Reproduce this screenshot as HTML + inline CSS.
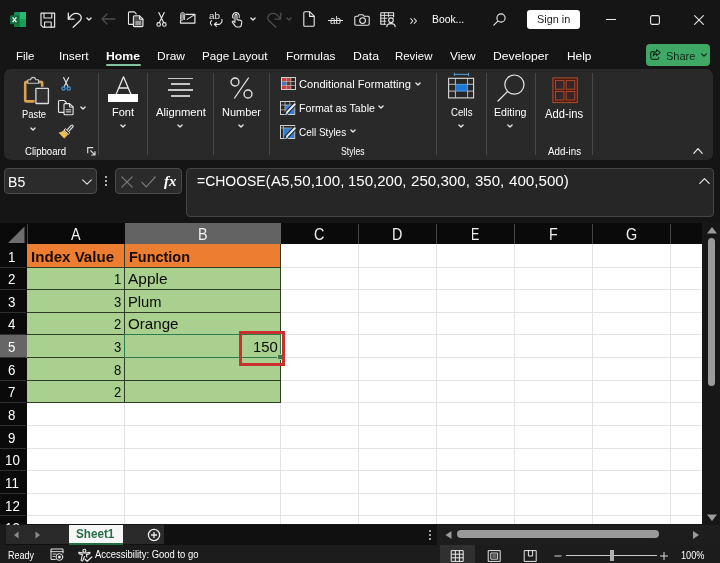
<!DOCTYPE html><html><head><meta charset="utf-8"><title>Excel</title><style>
html,body{margin:0;padding:0;}body{width:720px;height:563px;overflow:hidden;position:relative;background:#151515;font-family:'Liberation Sans', sans-serif;}
.t{position:absolute;white-space:nowrap;line-height:1;transform-origin:0 0;}
#w{position:absolute;left:0;top:0;width:720px;height:563px;will-change:transform;}
</style></head><body><div id="w">
<div style="position:absolute;left:527px;top:10px;width:53px;height:19px;background:#ffffff;z-index:2;border-radius:3px;"></div>
<div style="position:absolute;left:106px;top:63.8px;width:35px;height:2.2px;background:#82c4a0;z-index:3;border-radius:1px;"></div>
<div style="position:absolute;left:646px;top:44px;width:64px;height:22px;background:#3fa865;z-index:2;border-radius:4px;"></div>
<div style="position:absolute;left:4px;top:69px;width:709px;height:91px;background:#292929;z-index:1;border-radius:7px;"></div>
<div style="position:absolute;left:98.2px;top:73px;width:1px;height:82px;background:#484848;z-index:2;"></div>
<div style="position:absolute;left:147.1px;top:73px;width:1px;height:82px;background:#484848;z-index:2;"></div>
<div style="position:absolute;left:213.1px;top:73px;width:1px;height:82px;background:#484848;z-index:2;"></div>
<div style="position:absolute;left:269px;top:73px;width:1px;height:82px;background:#484848;z-index:2;"></div>
<div style="position:absolute;left:435.7px;top:73px;width:1px;height:82px;background:#484848;z-index:2;"></div>
<div style="position:absolute;left:485.7px;top:73px;width:1px;height:82px;background:#484848;z-index:2;"></div>
<div style="position:absolute;left:535px;top:73px;width:1px;height:82px;background:#484848;z-index:2;"></div>
<div style="position:absolute;left:592px;top:73px;width:1px;height:82px;background:#484848;z-index:2;"></div>
<div style="position:absolute;left:4px;top:168px;width:93px;height:26px;background:#2b2b2b;z-index:1;border-radius:4px;box-sizing:border-box;border:1px solid #4a4a4a;"></div>
<div style="position:absolute;left:115px;top:168px;width:67px;height:26px;background:#2b2b2b;z-index:1;border-radius:4px;box-sizing:border-box;border:1px solid #4a4a4a;"></div>
<div style="position:absolute;left:186px;top:168px;width:528px;height:49px;background:#262626;z-index:1;border-radius:4px;box-sizing:border-box;border:1px solid #454545;"></div>
<div style="position:absolute;left:27px;top:244.4px;width:675.2px;height:280.1px;background:#ffffff;z-index:1;"></div>
<div style="position:absolute;left:124.0px;top:244.4px;width:1px;height:280.1px;background:#e4e4e4;z-index:2;"></div>
<div style="position:absolute;left:280.3px;top:244.4px;width:1px;height:280.1px;background:#e4e4e4;z-index:2;"></div>
<div style="position:absolute;left:358.1px;top:244.4px;width:1px;height:280.1px;background:#e4e4e4;z-index:2;"></div>
<div style="position:absolute;left:436.1px;top:244.4px;width:1px;height:280.1px;background:#e4e4e4;z-index:2;"></div>
<div style="position:absolute;left:514.1px;top:244.4px;width:1px;height:280.1px;background:#e4e4e4;z-index:2;"></div>
<div style="position:absolute;left:592.1px;top:244.4px;width:1px;height:280.1px;background:#e4e4e4;z-index:2;"></div>
<div style="position:absolute;left:670.3px;top:244.4px;width:1px;height:280.1px;background:#e4e4e4;z-index:2;"></div>
<div style="position:absolute;left:27px;top:266.53000000000003px;width:675.2px;height:1px;background:#e4e4e4;z-index:2;"></div>
<div style="position:absolute;left:27px;top:289.16px;width:675.2px;height:1px;background:#e4e4e4;z-index:2;"></div>
<div style="position:absolute;left:27px;top:311.79px;width:675.2px;height:1px;background:#e4e4e4;z-index:2;"></div>
<div style="position:absolute;left:27px;top:334.42px;width:675.2px;height:1px;background:#e4e4e4;z-index:2;"></div>
<div style="position:absolute;left:27px;top:357.05px;width:675.2px;height:1px;background:#e4e4e4;z-index:2;"></div>
<div style="position:absolute;left:27px;top:379.68px;width:675.2px;height:1px;background:#e4e4e4;z-index:2;"></div>
<div style="position:absolute;left:27px;top:402.31px;width:675.2px;height:1px;background:#e4e4e4;z-index:2;"></div>
<div style="position:absolute;left:27px;top:424.94px;width:675.2px;height:1px;background:#e4e4e4;z-index:2;"></div>
<div style="position:absolute;left:27px;top:447.57px;width:675.2px;height:1px;background:#e4e4e4;z-index:2;"></div>
<div style="position:absolute;left:27px;top:470.2px;width:675.2px;height:1px;background:#e4e4e4;z-index:2;"></div>
<div style="position:absolute;left:27px;top:492.83px;width:675.2px;height:1px;background:#e4e4e4;z-index:2;"></div>
<div style="position:absolute;left:27px;top:515.46px;width:675.2px;height:1px;background:#e4e4e4;z-index:2;"></div>
<div style="position:absolute;left:0px;top:222.5px;width:702.2px;height:21.900000000000006px;background:#0a0a0a;z-index:2;"></div>
<div style="position:absolute;left:124.5px;top:222.5px;width:156.3px;height:21.900000000000006px;background:#636363;z-index:3;"></div>
<div style="position:absolute;left:358.1px;top:223.5px;width:1px;height:20.900000000000006px;background:#454545;z-index:3;"></div>
<div style="position:absolute;left:436.1px;top:223.5px;width:1px;height:20.900000000000006px;background:#454545;z-index:3;"></div>
<div style="position:absolute;left:514.1px;top:223.5px;width:1px;height:20.900000000000006px;background:#454545;z-index:3;"></div>
<div style="position:absolute;left:592.1px;top:223.5px;width:1px;height:20.900000000000006px;background:#454545;z-index:3;"></div>
<div style="position:absolute;left:670.3px;top:223.5px;width:1px;height:20.900000000000006px;background:#454545;z-index:3;"></div>
<div style="position:absolute;left:26.5px;top:223.5px;width:1px;height:20.900000000000006px;background:#454545;z-index:3;"></div>
<svg style="position:absolute;left:0px;top:222.5px;z-index:3;overflow:visible;" width="27" height="22" viewBox="0 0 27 22"><polygon points="24.5,3.5 24.5,20 8,20" fill="#6e6e6e"/></svg>
<div style="position:absolute;left:0px;top:244.4px;width:27px;height:280.1px;background:#0a0a0a;z-index:2;"></div>
<div style="position:absolute;left:0px;top:334.92px;width:27px;height:22.63px;background:#666666;z-index:3;"></div>
<div style="position:absolute;left:0px;top:266.53000000000003px;width:26px;height:1px;background:#303030;z-index:3;"></div>
<div style="position:absolute;left:0px;top:289.16px;width:26px;height:1px;background:#303030;z-index:3;"></div>
<div style="position:absolute;left:0px;top:311.79px;width:26px;height:1px;background:#303030;z-index:3;"></div>
<div style="position:absolute;left:0px;top:334.42px;width:26px;height:1px;background:#303030;z-index:3;"></div>
<div style="position:absolute;left:0px;top:357.05px;width:26px;height:1px;background:#303030;z-index:3;"></div>
<div style="position:absolute;left:0px;top:379.68px;width:26px;height:1px;background:#303030;z-index:3;"></div>
<div style="position:absolute;left:0px;top:402.31px;width:26px;height:1px;background:#303030;z-index:3;"></div>
<div style="position:absolute;left:0px;top:424.94px;width:26px;height:1px;background:#303030;z-index:3;"></div>
<div style="position:absolute;left:0px;top:447.57px;width:26px;height:1px;background:#303030;z-index:3;"></div>
<div style="position:absolute;left:0px;top:470.2px;width:26px;height:1px;background:#303030;z-index:3;"></div>
<div style="position:absolute;left:0px;top:492.83px;width:26px;height:1px;background:#303030;z-index:3;"></div>
<div style="position:absolute;left:0px;top:515.46px;width:26px;height:1px;background:#303030;z-index:3;"></div>
<div style="position:absolute;left:27px;top:244.4px;width:253.8px;height:22.63px;background:#ed7d31;z-index:3;"></div>
<div style="position:absolute;left:27px;top:267.03000000000003px;width:253.8px;height:135.78px;background:#a9d08e;z-index:3;"></div>
<div style="position:absolute;left:27px;top:266.53000000000003px;width:254.3px;height:1px;background:#2f3b22;z-index:4;"></div>
<div style="position:absolute;left:27px;top:289.16px;width:254.3px;height:1px;background:#2f3b22;z-index:4;"></div>
<div style="position:absolute;left:27px;top:311.79px;width:254.3px;height:1px;background:#2f3b22;z-index:4;"></div>
<div style="position:absolute;left:27px;top:334.42px;width:254.3px;height:1px;background:#2f3b22;z-index:4;"></div>
<div style="position:absolute;left:27px;top:357.05px;width:254.3px;height:1px;background:#2f3b22;z-index:4;"></div>
<div style="position:absolute;left:27px;top:379.68px;width:254.3px;height:1px;background:#2f3b22;z-index:4;"></div>
<div style="position:absolute;left:27px;top:402.31px;width:254.3px;height:1px;background:#2f3b22;z-index:4;"></div>
<div style="position:absolute;left:124.0px;top:244.4px;width:1px;height:158.41px;background:#2f3b22;z-index:4;"></div>
<div style="position:absolute;left:280.3px;top:244.4px;width:1px;height:158.41px;background:#2f3b22;z-index:4;"></div>
<div style="position:absolute;left:124.0px;top:333.92px;width:157.3px;height:24.13px;background:transparent;z-index:5;box-sizing:border-box;border:1.5px solid #2f7d4f;"></div>
<div style="position:absolute;left:277.8px;top:354.55px;width:4px;height:4px;background:#2f7d4f;z-index:6;outline:1px solid #a9d08e;"></div>
<div style="position:absolute;left:239px;top:331px;width:46px;height:35.3px;background:transparent;z-index:7;box-sizing:border-box;border:3px solid #cc2f2f;"></div>
<div style="position:absolute;left:702.2px;top:222.5px;width:17.799999999999955px;height:302.0px;background:#171717;z-index:2;"></div>
<div style="position:absolute;left:707.9px;top:238px;width:7.2px;height:147.5px;background:#9a9a9a;z-index:3;border-radius:4px;"></div>
<svg style="position:absolute;left:706px;top:226px;z-index:3;overflow:visible;" width="12" height="8" viewBox="0 0 12 8"><polygon points="6,1 11,7.5 1,7.5" fill="#9a9a9a"/></svg>
<svg style="position:absolute;left:706px;top:514px;z-index:3;overflow:visible;" width="12" height="8" viewBox="0 0 12 8"><polygon points="1,0.5 11,0.5 6,7" fill="#9a9a9a"/></svg>
<div style="position:absolute;left:0px;top:524.5px;width:720px;height:20.5px;background:#101010;z-index:12;"></div>
<div style="position:absolute;left:0px;top:524.5px;width:6px;height:20.5px;background:#1a1a1a;z-index:12;"></div>
<div style="position:absolute;left:436.6px;top:524.5px;width:283.4px;height:20.5px;background:#1d1d1d;z-index:12;"></div>
<div style="position:absolute;left:6px;top:524.5px;width:158.4px;height:19.8px;background:#2a2a2a;z-index:13;"></div>
<div style="position:absolute;left:68.6px;top:524.5px;width:54.4px;height:20px;background:#f7f7f7;z-index:14;"></div>
<div style="position:absolute;left:68.6px;top:543px;width:54.4px;height:1.5px;background:#236b43;z-index:15;"></div>
<svg style="position:absolute;left:12px;top:530px;z-index:15;overflow:visible;" width="10" height="10" viewBox="0 0 10 10"><polygon points="6.5,1.5 6.5,8.5 2,5" fill="#8c8c8c"/></svg>
<svg style="position:absolute;left:32px;top:530px;z-index:15;overflow:visible;" width="10" height="10" viewBox="0 0 10 10"><polygon points="3.5,1.5 3.5,8.5 8,5" fill="#8c8c8c"/></svg>
<svg style="position:absolute;left:146.5px;top:527.5px;z-index:15;overflow:visible;" width="14" height="14" viewBox="0 0 14 14"><circle cx="7" cy="7" r="5.6" fill="none" stroke="#ececec" stroke-width="1.3"/><path d="M7 4v6M4 7h6" stroke="#ececec" stroke-width="1.3"/></svg>
<div style="position:absolute;left:429.2px;top:530.1px;width:1.8px;height:1.8px;background:#d0d0d0;z-index:14;border-radius:1px;"></div>
<div style="position:absolute;left:429.2px;top:534.1px;width:1.8px;height:1.8px;background:#d0d0d0;z-index:14;border-radius:1px;"></div>
<div style="position:absolute;left:429.2px;top:538.1px;width:1.8px;height:1.8px;background:#d0d0d0;z-index:14;border-radius:1px;"></div>
<svg style="position:absolute;left:443px;top:530px;z-index:14;overflow:visible;" width="10" height="10" viewBox="0 0 10 10"><polygon points="8.5,1 8.5,9 2.5,5" fill="#9a9a9a"/></svg>
<svg style="position:absolute;left:691px;top:530px;z-index:14;overflow:visible;" width="10" height="10" viewBox="0 0 10 10"><polygon points="2,1 2,9 8,5" fill="#9a9a9a"/></svg>
<div style="position:absolute;left:456.5px;top:530px;width:202px;height:8.4px;background:#9a9a9a;z-index:14;border-radius:4.2px;"></div>
<div style="position:absolute;left:0px;top:545px;width:720px;height:18px;background:#1c1c1c;z-index:12;"></div>
<div style="position:absolute;left:439.6px;top:545px;width:35.6px;height:18px;background:#303030;z-index:13;"></div>
<div style="position:absolute;left:566px;top:555px;width:91px;height:1px;background:#c8c8c8;z-index:13;"></div>
<div style="position:absolute;left:609.5px;top:549.5px;width:4.5px;height:11.5px;background:#b0b0b0;z-index:14;"></div>
<svg style="position:absolute;left:553px;top:551px;z-index:14;overflow:visible;" width="10" height="10" viewBox="0 0 10 10"><path d="M1.5 5h7" stroke="#d8d8d8" stroke-width="1"/></svg>
<svg style="position:absolute;left:659px;top:551px;z-index:14;overflow:visible;" width="10" height="10" viewBox="0 0 10 10"><path d="M1 5h8M5 1v8" stroke="#d8d8d8" stroke-width="1"/></svg>
<svg style="position:absolute;left:10px;top:12px;z-index:4;overflow:visible;" width="16" height="15" viewBox="0 0 16 15"><rect x="4" y="0" width="12" height="15" rx="1.5" fill="#1a8f55"/><rect x="10" y="0" width="6" height="7.5" fill="#2bb673"/><rect x="4" y="7.5" width="6" height="7.5" fill="#107c41"/><rect x="10" y="7.5" width="6" height="7.5" fill="#1c9a5c"/><rect x="0" y="3.3" width="9" height="9" rx="1" fill="#0f6e3b"/><path d="M2.6 5.4L6.4 10.2M6.4 5.4L2.6 10.2" stroke="#fff" stroke-width="1.3"/></svg>
<svg style="position:absolute;left:40px;top:11.5px;z-index:4;overflow:visible;" width="16" height="16" viewBox="0 0 16 16"><path d="M1 1.2H14.6V15.2H3L1 13.2Z" fill="none" stroke="#e8e8e8" stroke-width="1.2" stroke-linecap="round" stroke-linejoin="round"/><path d="M4 1.2V6H11.8V1.2" fill="none" stroke="#e8e8e8" stroke-width="1.1" stroke-linecap="round" stroke-linejoin="round"/><path d="M4.6 15.2V10H11.2V15.2" fill="none" stroke="#e8e8e8" stroke-width="1.1" stroke-linecap="round" stroke-linejoin="round"/></svg>
<svg style="position:absolute;left:66.5px;top:11.5px;z-index:4;overflow:visible;" width="16" height="16" viewBox="0 0 16 16"><path d="M1.3 1.2V7.1H7" fill="none" stroke="#e8e8e8" stroke-width="1.3" stroke-linecap="round" stroke-linejoin="round"/><path d="M1.5 6.9C4 3 7.6 0.7 11 1.7C14.6 2.9 15.2 6.4 13 8.8L6.2 15.2" fill="none" stroke="#e8e8e8" stroke-width="1.3" stroke-linecap="round" stroke-linejoin="round"/></svg>
<svg style="position:absolute;left:83.8px;top:13.8px;z-index:4;overflow:visible;" width="10" height="10" viewBox="0 0 10 10"><path d="M2.9 3.95L5 6.05L7.1 3.95" fill="none" stroke="#e8e8e8" stroke-width="1.3" stroke-linecap="round" stroke-linejoin="round"/></svg>
<svg style="position:absolute;left:101px;top:13px;z-index:4;overflow:visible;" width="15" height="12" viewBox="0 0 15 12"><path d="M14 6H1M6 1L1 6L6 11" fill="none" stroke="#4c4c4c" stroke-width="1.3" stroke-linecap="round" stroke-linejoin="round"/></svg>
<svg style="position:absolute;left:128px;top:11px;z-index:4;overflow:visible;" width="16" height="16" viewBox="0 0 16 16"><path d="M5.2 13.4H1.5Q0.5 13.4 0.5 12.4V1.9Q0.5 0.9 1.5 0.9H5.8Q6.4 0.9 6.9 1.4L8.2 2.8" fill="none" stroke="#e8e8e8" stroke-width="1.1" stroke-linecap="round" stroke-linejoin="round"/><path d="M5.4 5.8Q5.4 4.8 6.4 4.8H11.6L15 8.2V14.6Q15 15.6 14 15.6H6.4Q5.4 15.6 5.4 14.6Z" fill="#4e4e4e" stroke="#e8e8e8" stroke-width="1.1" stroke-linejoin="round"/><path d="M11.5 5V8.3H14.8" fill="none" stroke="#e8e8e8" stroke-width="1" stroke-linecap="round" stroke-linejoin="round"/><path d="M7.8 11H12.6M7.8 13H12.6" fill="none" stroke="#e8e8e8" stroke-width="1" stroke-linecap="round" stroke-linejoin="round"/></svg>
<svg style="position:absolute;left:156px;top:12px;z-index:4;overflow:visible;" width="11.0" height="15.0" viewBox="0 0 11 15"><path d="M2.8 0.6L7.6 10.4M8.2 0.6L3.4 10.4" fill="none" stroke="#e8e8e8" stroke-width="1.1" stroke-linecap="round" stroke-linejoin="round"/><circle cx="2.7" cy="12.4" r="1.8" fill="none" stroke="#e8e8e8" stroke-width="1.1" stroke-linecap="round" stroke-linejoin="round"/><circle cx="8.3" cy="12.4" r="1.8" fill="none" stroke="#e8e8e8" stroke-width="1.1" stroke-linecap="round" stroke-linejoin="round"/></svg>
<svg style="position:absolute;left:180px;top:12px;z-index:4;overflow:visible;" width="16" height="12" viewBox="0 0 16 12"><path d="M5.9 2.4H14.9V11.1H0.5V8.6" fill="none" stroke="#e8e8e8" stroke-width="1.2" stroke-linecap="round" stroke-linejoin="round"/><path d="M14.7 2.6L7.2 7.4" fill="none" stroke="#e8e8e8" stroke-width="1.1" stroke-linecap="round" stroke-linejoin="round"/><path d="M0.6 6.8V2.6Q0.6 0.5 2.6 0.5Q4.6 0.5 4.6 2.6V7.6" fill="none" stroke="#e8e8e8" stroke-width="0.9" stroke-linecap="round" stroke-linejoin="round"/><path d="M1.9 6.4V3Q1.9 1.9 2.6 1.9Q3.3 1.9 3.3 3V6.8Q3.3 8.3 2 8.3Q0.6 8.3 0.6 6.8" fill="none" stroke="#e8e8e8" stroke-width="0.9" stroke-linecap="round" stroke-linejoin="round"/></svg>
<svg style="position:absolute;left:208.5px;top:12px;z-index:4;overflow:visible;" width="15" height="15" viewBox="0 0 15 15"><path d="M12.9 7.4Q13.6 11.2 10 12.4H5.6" fill="none" stroke="#e8e8e8" stroke-width="1.1" stroke-linecap="round" stroke-linejoin="round"/><path d="M7.4 10.5L5.4 12.4L7.4 14.3" fill="none" stroke="#e8e8e8" stroke-width="1.1" stroke-linecap="round" stroke-linejoin="round"/><path d="M2.6 8.6Q0.2 10.8 2.6 13.2" fill="none" stroke="#e8e8e8" stroke-width="1.1" stroke-linecap="round" stroke-linejoin="round"/></svg>
<svg style="position:absolute;left:231px;top:11.5px;z-index:4;overflow:visible;" width="12" height="16" viewBox="0 0 12 16"><path d="M4 9.2V3.6Q4 2.4 5 2.4Q6 2.4 6 3.6V7.6L9.8 8.4Q11 8.8 10.8 10.2L10.2 13.4Q10 15 8.6 15H6Q5 15 4.4 14.2L1.4 10.4Q1 9.6 1.8 9.2Q2.6 9 3.2 9.6L4 10.6" fill="none" stroke="#e8e8e8" stroke-width="1.1" stroke-linecap="round" stroke-linejoin="round"/><path d="M2.2 6.2Q0.8 3.6 2.6 1.6Q5 -0.4 7.4 1.6Q9 3.4 8.2 5.6" fill="none" stroke="#e8e8e8" stroke-width="1.1" stroke-linecap="round" stroke-linejoin="round"/></svg>
<svg style="position:absolute;left:248px;top:13.8px;z-index:4;overflow:visible;" width="10" height="10" viewBox="0 0 10 10"><path d="M2.9 3.95L5 6.05L7.1 3.95" fill="none" stroke="#e8e8e8" stroke-width="1.3" stroke-linecap="round" stroke-linejoin="round"/></svg>
<svg style="position:absolute;left:266px;top:11.5px;z-index:4;overflow:visible;" width="16" height="16" viewBox="0 0 16 16"><path d="M14.7 1.2V7.1H9" fill="none" stroke="#4c4c4c" stroke-width="1.3" stroke-linecap="round" stroke-linejoin="round"/><path d="M14.5 6.9C12 3 8.4 0.7 5 1.7C1.4 2.9 0.8 6.4 3 8.8L9.8 15.2" fill="none" stroke="#4c4c4c" stroke-width="1.3" stroke-linecap="round" stroke-linejoin="round"/></svg>
<svg style="position:absolute;left:283.8px;top:13.8px;z-index:4;overflow:visible;" width="10" height="10" viewBox="0 0 10 10"><path d="M2.9 3.95L5 6.05L7.1 3.95" fill="none" stroke="#4c4c4c" stroke-width="1.3" stroke-linecap="round" stroke-linejoin="round"/></svg>
<svg style="position:absolute;left:303px;top:11px;z-index:4;overflow:visible;" width="12" height="16" viewBox="0 0 12 16"><path d="M1.9 0.8H6.8L11.2 5.2V14.2Q11.2 15.3 10.1 15.3H1.9Q0.8 15.3 0.8 14.2V1.9Q0.8 0.8 1.9 0.8Z" fill="none" stroke="#e8e8e8" stroke-width="1.1" stroke-linecap="round" stroke-linejoin="round"/><path d="M6.6 1V5.4H11" fill="none" stroke="#e8e8e8" stroke-width="1.1" stroke-linecap="round" stroke-linejoin="round"/></svg>
<div style="position:absolute;left:327.5px;top:19.8px;width:15px;height:1px;background:#e8e8e8;z-index:5;"></div>
<svg style="position:absolute;left:353.5px;top:13.5px;z-index:4;overflow:visible;" width="16" height="12" viewBox="0 0 16 12"><path d="M1.9 2.2H4L5 0.8H9L10 2.2H14.1Q15.2 2.2 15.2 3.3V10.1Q15.2 11.2 14.1 11.2H1.9Q0.8 11.2 0.8 10.1V3.3Q0.8 2.2 1.9 2.2Z" fill="none" stroke="#e8e8e8" stroke-width="1.1" stroke-linecap="round" stroke-linejoin="round"/><circle cx="8.6" cy="6.6" r="2.9" fill="none" stroke="#e8e8e8" stroke-width="1.1" stroke-linecap="round" stroke-linejoin="round"/></svg>
<svg style="position:absolute;left:380px;top:12px;z-index:4;overflow:visible;" width="16" height="15" viewBox="0 0 16 15"><path d="M5.8 12.2H0.8V0.8H13.6V5" fill="none" stroke="#e8e8e8" stroke-width="1.1" stroke-linecap="round" stroke-linejoin="round"/><path d="M0.8 3.4H13.6M0.8 6.2H7M0.8 9.2H6M4.4 0.8V12.2M8.6 0.8V5" fill="none" stroke="#e8e8e8" stroke-width="0.9" stroke-linecap="round" stroke-linejoin="round"/><circle cx="11" cy="8.2" r="2.3" fill="none" stroke="#e8e8e8" stroke-width="1.1" stroke-linecap="round" stroke-linejoin="round"/><path d="M6.8 14.6Q7 11.6 11 11.6Q15 11.6 15.2 14.6" fill="none" stroke="#e8e8e8" stroke-width="1.1" stroke-linecap="round" stroke-linejoin="round"/></svg>
<svg style="position:absolute;left:410.2px;top:17.6px;z-index:4;overflow:visible;" width="8" height="6" viewBox="0 0 8 6"><path d="M0.7 0.7L2.9 3L0.7 5.3M4.3 0.7L6.5 3L4.3 5.3" fill="none" stroke="#e8e8e8" stroke-width="1.05" stroke-linecap="round" stroke-linejoin="round"/></svg>
<svg style="position:absolute;left:493px;top:13px;z-index:4;overflow:visible;" width="13" height="13" viewBox="0 0 13 13"><circle cx="8" cy="5" r="4.1" fill="none" stroke="#e8e8e8" stroke-width="1.1" stroke-linecap="round" stroke-linejoin="round"/><path d="M4.9 8.1L0.8 12.2" fill="none" stroke="#e8e8e8" stroke-width="1.15" stroke-linecap="round" stroke-linejoin="round"/></svg>
<div style="position:absolute;left:606px;top:18.6px;width:10px;height:1px;background:#e8e8e8;z-index:4;"></div>
<svg style="position:absolute;left:650px;top:15px;z-index:4;overflow:visible;" width="10" height="10" viewBox="0 0 10 10"><rect x="0.6" y="0.6" width="8.8" height="8.8" rx="1.6" fill="none" stroke="#e8e8e8" stroke-width="1.1" stroke-linecap="round" stroke-linejoin="round"/></svg>
<svg style="position:absolute;left:694px;top:15px;z-index:4;overflow:visible;" width="10" height="10" viewBox="0 0 10 10"><path d="M0.6 0.6L9.4 9.4M9.4 0.6L0.6 9.4" fill="none" stroke="#e8e8e8" stroke-width="1.1" stroke-linecap="round" stroke-linejoin="round"/></svg>
<svg style="position:absolute;left:650.4px;top:49.4px;z-index:4;overflow:visible;" width="11" height="11" viewBox="0 0 11 11"><path d="M4 2.6H2.4Q0.8 2.6 0.8 4.2V8.8Q0.8 10.4 2.4 10.4H7.2Q8.8 10.4 8.8 8.8V8.2" fill="none" stroke="#0c2a17" stroke-width="1.1" stroke-linecap="round" stroke-linejoin="round"/><path d="M6.6 0.7L10.2 3.7L6.6 6.7V4.9Q4.2 4.8 3.2 7Q3.3 3 6.6 2.5Z" fill="none" stroke="#0c2a17" stroke-width="1.05" stroke-linecap="round" stroke-linejoin="round"/></svg>
<svg style="position:absolute;left:698.5px;top:50.2px;z-index:4;overflow:visible;" width="10" height="10" viewBox="0 0 10 10"><path d="M2.6 3.8L5 6.2L7.4 3.8" fill="none" stroke="#0c2a17" stroke-width="1.2" stroke-linecap="round" stroke-linejoin="round"/></svg>
<svg style="position:absolute;left:23px;top:76px;z-index:4;overflow:visible;" width="27" height="29" viewBox="0 0 27 29"><path d="M6 5.9H3.5Q2.2 5.9 2.2 7.2V24.1Q2.2 25.4 3.5 25.4H11.6" fill="none" stroke="#d9a253" stroke-width="2.6" stroke-linejoin="round"/><path d="M15 5.9H17.9Q19.2 5.9 19.2 7.2V10.8" fill="none" stroke="#d9a253" stroke-width="2.6"/><path d="M4.8 7.2V4.6Q4.8 3.8 5.6 3.8H7.6Q8 1.4 10.2 1.4Q12.4 1.4 12.8 3.8H14.8Q15.6 3.8 15.6 4.6V7.2Z" fill="#2a2a2a" stroke="#c8c8c8" stroke-width="1.1"/><rect x="12.9" y="12.3" width="12.5" height="15.2" rx="0.6" fill="#303030" stroke="#dcdcdc" stroke-width="1.3"/></svg>
<svg style="position:absolute;left:28.4px;top:124px;z-index:4;overflow:visible;" width="10" height="10" viewBox="0 0 10 10"><path d="M2.9 3.95L5 6.05L7.1 3.95" fill="none" stroke="#e8e8e8" stroke-width="1.3" stroke-linecap="round" stroke-linejoin="round"/></svg>
<svg style="position:absolute;left:60.7px;top:76.8px;z-index:4;overflow:visible;" width="10.23" height="13.950000000000001" viewBox="0 0 11 15"><path d="M2.8 0.6L7.6 10.4M8.2 0.6L3.4 10.4" fill="none" stroke="#dde3ea" stroke-width="1.25" stroke-linecap="round" stroke-linejoin="round"/><circle cx="2.7" cy="12.4" r="1.8" fill="none" stroke="#3f9be4" stroke-width="1.25" stroke-linecap="round" stroke-linejoin="round"/><circle cx="8.3" cy="12.4" r="1.8" fill="none" stroke="#3f9be4" stroke-width="1.25" stroke-linecap="round" stroke-linejoin="round"/></svg>
<svg style="position:absolute;left:58px;top:100px;z-index:4;overflow:visible;" width="16" height="16" viewBox="0 0 16 16"><path d="M5.6 12.4H1.5Q0.5 12.4 0.5 11.4V1.5Q0.5 0.5 1.5 0.5H5.6Q6.3 0.5 6.8 1L8.4 2.6" fill="none" stroke="#e8e8e8" stroke-width="1.1" stroke-linecap="round" stroke-linejoin="round"/><path d="M6 4.6Q6 3.6 7 3.6H11.6L15.1 7V13.8Q15.1 14.8 14.1 14.8H7Q6 14.8 6 13.8Z" fill="#2a2a2a" stroke="#e8e8e8" stroke-width="1.1" stroke-linejoin="round"/><path d="M11.5 3.8V7.1H14.9" fill="none" stroke="#e8e8e8" stroke-width="1" stroke-linecap="round" stroke-linejoin="round"/><path d="M8.2 9.8H12.8M8.2 11.9H12.8" fill="none" stroke="#e8e8e8" stroke-width="1" stroke-linecap="round" stroke-linejoin="round"/></svg>
<svg style="position:absolute;left:77.5px;top:102.8px;z-index:4;overflow:visible;" width="10" height="10" viewBox="0 0 10 10"><path d="M2.9 3.95L5 6.05L7.1 3.95" fill="none" stroke="#e8e8e8" stroke-width="1.3" stroke-linecap="round" stroke-linejoin="round"/></svg>
<svg style="position:absolute;left:58px;top:123.5px;z-index:4;overflow:visible;" width="16" height="15" viewBox="0 0 16 15"><path d="M9.6 5.4L13.2 1.4Q14.2 0.6 14.9 1.3Q15.6 2 14.8 3L11.2 6.8" fill="none" stroke="#e8e8e8" stroke-width="1.1" stroke-linecap="round" stroke-linejoin="round"/><path d="M7.4 4.6L11.8 8.8L10.4 10.2L6 6Z" fill="#2a2a2a" stroke="#e8e8e8" stroke-width="1"/><path d="M5.6 6.6L9.8 10.6L6.2 14.2L1 8.8Q3.8 8.4 5.6 6.6Z" fill="#f0bf55" stroke="#f0bf55" stroke-width="0.6" stroke-linejoin="round"/></svg>
<svg style="position:absolute;left:87px;top:147px;z-index:4;overflow:visible;" width="9" height="9" viewBox="0 0 9 9"><path d="M0.7 6.2V0.7H6.2" fill="none" stroke="#d8d8d8" stroke-width="1.2"/><path d="M3.4 3.4L8 8M8 4.2V8H4.2" fill="none" stroke="#d8d8d8" stroke-width="1.2"/></svg>
<svg style="position:absolute;left:115px;top:75.5px;z-index:4;overflow:visible;" width="17" height="19" viewBox="0 0 17 19"><path d="M1 18.4L8.5 0.8L16 18.4M3.8 12H13.2" fill="none" stroke="#e8e8e8" stroke-width="1.3" stroke-linecap="round" stroke-linejoin="round"/></svg>
<div style="position:absolute;left:108px;top:94.4px;width:29.8px;height:7.9px;background:#ffffff;z-index:4;"></div>
<svg style="position:absolute;left:117.5px;top:121px;z-index:4;overflow:visible;" width="10" height="10" viewBox="0 0 10 10"><path d="M2.9 3.95L5 6.05L7.1 3.95" fill="none" stroke="#e8e8e8" stroke-width="1.3" stroke-linecap="round" stroke-linejoin="round"/></svg>
<div style="position:absolute;left:167.5px;top:77.95px;width:25.5px;height:1.1px;background:#c6c6c6;z-index:4;"></div>
<div style="position:absolute;left:171px;top:83.45px;width:19px;height:1.1px;background:#c6c6c6;z-index:4;"></div>
<div style="position:absolute;left:167.5px;top:89.45px;width:25.5px;height:1.1px;background:#c6c6c6;z-index:4;"></div>
<div style="position:absolute;left:171px;top:95.45px;width:19px;height:1.1px;background:#c6c6c6;z-index:4;"></div>
<svg style="position:absolute;left:174.7px;top:121px;z-index:4;overflow:visible;" width="10" height="10" viewBox="0 0 10 10"><path d="M2.9 3.95L5 6.05L7.1 3.95" fill="none" stroke="#e8e8e8" stroke-width="1.3" stroke-linecap="round" stroke-linejoin="round"/></svg>
<svg style="position:absolute;left:230px;top:77px;z-index:4;overflow:visible;" width="23" height="22" viewBox="0 0 23 22"><circle cx="5" cy="5" r="4" fill="none" stroke="#e8e8e8" stroke-width="1.3" stroke-linecap="round" stroke-linejoin="round"/><circle cx="18" cy="17" r="4" fill="none" stroke="#e8e8e8" stroke-width="1.3" stroke-linecap="round" stroke-linejoin="round"/><path d="M18.4 1L4.6 21" fill="none" stroke="#e8e8e8" stroke-width="1.3" stroke-linecap="round" stroke-linejoin="round"/></svg>
<svg style="position:absolute;left:236px;top:121px;z-index:4;overflow:visible;" width="10" height="10" viewBox="0 0 10 10"><path d="M2.9 3.95L5 6.05L7.1 3.95" fill="none" stroke="#e8e8e8" stroke-width="1.3" stroke-linecap="round" stroke-linejoin="round"/></svg>
<svg style="position:absolute;left:280.5px;top:77px;z-index:4;overflow:visible;" width="15" height="13" viewBox="0 0 15 13"><rect x="0.5" y="0.5" width="14" height="12" fill="#262626" stroke="#d0d0d0" stroke-width="1"/><rect x="1" y="1" width="4.2" height="3.4" fill="#d63a3a"/><rect x="5.6" y="1" width="4" height="3.4" fill="#d63a3a"/><rect x="1" y="4.8" width="4.2" height="3.4" fill="#3f6fc0"/><rect x="5.6" y="4.8" width="4" height="3.4" fill="#7a2a2a"/><rect x="1" y="8.6" width="4.2" height="3.4" fill="#d63a3a"/><rect x="5.6" y="8.6" width="4" height="3.4" fill="#d63a3a"/><path d="M5.4 0.5V12.5M9.8 0.5V12.5M0.5 4.6H14.5M0.5 8.4H14.5" stroke="#c8c8c8" stroke-width="0.7"/></svg>
<svg style="position:absolute;left:412.7px;top:78.5px;z-index:4;overflow:visible;" width="10" height="10" viewBox="0 0 10 10"><path d="M2.9 3.95L5 6.05L7.1 3.95" fill="none" stroke="#e8e8e8" stroke-width="1.3" stroke-linecap="round" stroke-linejoin="round"/></svg>
<svg style="position:absolute;left:280px;top:101.2px;z-index:4;overflow:visible;" width="16" height="15" viewBox="0 0 16 15"><rect x="0.5" y="0.5" width="14.2" height="13" fill="#262626" stroke="#d0d0d0" stroke-width="1"/><rect x="5" y="4" width="9.2" height="9" fill="#2f7fd6"/><path d="M5 0.5V13.5M9.8 0.5V4M0.5 4H14.7M0.5 8.8H5" stroke="#c8c8c8" stroke-width="0.7"/><path d="M14.6 3.4L6.2 12.2" stroke="#262626" stroke-width="4.2" stroke-linecap="round"/><path d="M14.8 3.2L7 11.4" stroke="#e6eef8" stroke-width="2" stroke-linecap="round"/><path d="M7 11.2Q5.4 12 4.6 14.2Q6.8 14.2 8.2 12.4Z" fill="#9cc7f2"/></svg>
<svg style="position:absolute;left:376px;top:102px;z-index:4;overflow:visible;" width="10" height="10" viewBox="0 0 10 10"><path d="M2.9 3.95L5 6.05L7.1 3.95" fill="none" stroke="#e8e8e8" stroke-width="1.3" stroke-linecap="round" stroke-linejoin="round"/></svg>
<svg style="position:absolute;left:280px;top:125px;z-index:4;overflow:visible;" width="16" height="15" viewBox="0 0 16 15"><rect x="0.5" y="0.5" width="14.2" height="13" fill="#262626" stroke="#d0d0d0" stroke-width="1"/><rect x="3.6" y="3.2" width="10.6" height="9.8" fill="#2f7fd6"/><path d="M3.4 0.5V13.5M0.5 3H14.7" stroke="#c8c8c8" stroke-width="0.7"/><path d="M14.6 3.4L6.2 12.2" stroke="#262626" stroke-width="4.2" stroke-linecap="round"/><path d="M14.8 3.2L7 11.4" stroke="#e6eef8" stroke-width="2" stroke-linecap="round"/><path d="M7 11.2Q5.4 12 4.6 14.2Q6.8 14.2 8.2 12.4Z" fill="#9cc7f2"/></svg>
<svg style="position:absolute;left:347.7px;top:126.19999999999999px;z-index:4;overflow:visible;" width="10" height="10" viewBox="0 0 10 10"><path d="M2.9 3.95L5 6.05L7.1 3.95" fill="none" stroke="#e8e8e8" stroke-width="1.3" stroke-linecap="round" stroke-linejoin="round"/></svg>
<svg style="position:absolute;left:448px;top:72px;z-index:4;overflow:visible;" width="27" height="27" viewBox="0 0 27 27"><path d="M6.4 0.8V4M20.6 0.8V4M6.4 2.4H20.6" fill="none" stroke="#5a9fd6" stroke-width="1"/><rect x="0.6" y="6.3" width="25" height="19.6" fill="#262626" stroke="#dcdcdc" stroke-width="1.1"/><rect x="7.4" y="12.3" width="12.2" height="6.8" fill="#1f78d2" stroke="#5aaaf0" stroke-width="0.8"/><path d="M7.4 6.3V12.3M7.4 19.1V25.9M19.6 6.3V12.3M19.6 19.1V25.9M0.6 12.3H7.4M19.6 12.3H25.6M0.6 19.1H7.4M19.6 19.1H25.6" stroke="#d0d0d0" stroke-width="0.9"/></svg>
<svg style="position:absolute;left:455.8px;top:121px;z-index:4;overflow:visible;" width="10" height="10" viewBox="0 0 10 10"><path d="M2.9 3.95L5 6.05L7.1 3.95" fill="none" stroke="#e8e8e8" stroke-width="1.3" stroke-linecap="round" stroke-linejoin="round"/></svg>
<svg style="position:absolute;left:496.5px;top:73.5px;z-index:4;overflow:visible;" width="29" height="29" viewBox="0 0 29 29"><circle cx="17.4" cy="10.6" r="9.6" fill="none" stroke="#e8e8e8" stroke-width="1.2" stroke-linecap="round" stroke-linejoin="round"/><path d="M10.4 17.6L1 27" fill="none" stroke="#e8e8e8" stroke-width="1.3" stroke-linecap="round" stroke-linejoin="round"/></svg>
<svg style="position:absolute;left:505px;top:121px;z-index:4;overflow:visible;" width="10" height="10" viewBox="0 0 10 10"><path d="M2.9 3.95L5 6.05L7.1 3.95" fill="none" stroke="#e8e8e8" stroke-width="1.3" stroke-linecap="round" stroke-linejoin="round"/></svg>
<svg style="position:absolute;left:551.5px;top:76.5px;z-index:4;overflow:visible;" width="26" height="26.4" viewBox="0 0 26 26.4"><rect x="0.9" y="0.9" width="24.4" height="24.7" fill="#501b0f" stroke="#b04e2e" stroke-width="1"/><rect x="3.4" y="3.6" width="8.6" height="8.6" fill="#33262a" stroke="#b04e2e" stroke-width="0.9"/><rect x="14.2" y="3.6" width="8.6" height="8.6" fill="#33262a" stroke="#b04e2e" stroke-width="0.9"/><rect x="3.4" y="14.4" width="8.6" height="8.6" fill="#33262a" stroke="#b04e2e" stroke-width="0.9"/><rect x="14.2" y="14.4" width="8.6" height="8.6" fill="#33262a" stroke="#b04e2e" stroke-width="0.9"/></svg>
<svg style="position:absolute;left:692.5px;top:147px;z-index:4;overflow:visible;" width="10" height="8" viewBox="0 0 10 8"><path d="M0.8 6.4L5 1.6L9.2 6.4" fill="none" stroke="#e8e8e8" stroke-width="1.2" stroke-linecap="round" stroke-linejoin="round"/></svg>
<svg style="position:absolute;left:82px;top:176.8px;z-index:4;overflow:visible;" width="10" height="10" viewBox="0 0 10 10"><path d="M0.7000000000000002 2.85L5 7.15L9.3 2.85" fill="none" stroke="#e0e0e0" stroke-width="1.15" stroke-linecap="round" stroke-linejoin="round"/></svg>
<div style="position:absolute;left:104.5px;top:176.3px;width:2px;height:2px;background:#e4e4e4;z-index:4;border-radius:1px;"></div>
<div style="position:absolute;left:104.5px;top:180.3px;width:2px;height:2px;background:#e4e4e4;z-index:4;border-radius:1px;"></div>
<div style="position:absolute;left:104.5px;top:184.3px;width:2px;height:2px;background:#e4e4e4;z-index:4;border-radius:1px;"></div>
<svg style="position:absolute;left:121px;top:175.5px;z-index:4;overflow:visible;" width="12" height="12" viewBox="0 0 12 12"><path d="M0.8 0.8L11.2 11.2M11.2 0.8L0.8 11.2" fill="none" stroke="#7a7a7a" stroke-width="1.2" stroke-linecap="round" stroke-linejoin="round"/></svg>
<svg style="position:absolute;left:141px;top:175.5px;z-index:4;overflow:visible;" width="15" height="12" viewBox="0 0 15 12"><path d="M0.8 6.2L5.2 10.8L14.2 1" fill="none" stroke="#7a7a7a" stroke-width="1.2" stroke-linecap="round" stroke-linejoin="round"/></svg>
<svg style="position:absolute;left:699px;top:176.5px;z-index:4;overflow:visible;" width="11" height="8" viewBox="0 0 11 8"><path d="M0.8 6.4L5.5 1.6L10.2 6.4" fill="none" stroke="#e8e8e8" stroke-width="1.2" stroke-linecap="round" stroke-linejoin="round"/></svg>
<svg style="position:absolute;left:50px;top:548px;z-index:15;overflow:visible;" width="14" height="13" viewBox="0 0 14 13"><path d="M13 5V1H1V11.4H5.4" fill="none" stroke="#e8e8e8" stroke-width="1" stroke-linecap="round" stroke-linejoin="round"/><path d="M1 3.6H13M3 6H6M3 8.4H5" fill="none" stroke="#e8e8e8" stroke-width="0.9" stroke-linecap="round" stroke-linejoin="round"/><circle cx="9.4" cy="9" r="3.4" fill="none" stroke="#e8e8e8" stroke-width="1" stroke-linecap="round" stroke-linejoin="round"/><circle cx="9.4" cy="9" r="1.5" fill="#e8e8e8"/></svg>
<svg style="position:absolute;left:78px;top:547px;z-index:15;overflow:visible;" width="15" height="15" viewBox="0 0 15 15"><circle cx="6.4" cy="3.7" r="1.5" fill="none" stroke="#e8e8e8" stroke-width="1.1" stroke-linecap="round" stroke-linejoin="round"/><path d="M1 5.4Q0.6 6.6 1.8 6.9L4.4 7.6L3.2 13Q3.1 14 4 14Q4.8 14 5 13.2L6.4 9.6" fill="none" stroke="#e8e8e8" stroke-width="1.1" stroke-linecap="round" stroke-linejoin="round"/><path d="M11.8 5.4Q12.2 6.6 11 6.9L8.4 7.6L8.8 10" fill="none" stroke="#e8e8e8" stroke-width="1.1" stroke-linecap="round" stroke-linejoin="round"/><path d="M1 5.4Q3.6 6 6.4 6Q9.2 6 11.8 5.4" fill="none" stroke="#e8e8e8" stroke-width="1.1" stroke-linecap="round" stroke-linejoin="round"/><path d="M7 12.2L9.2 14.2L13.8 10" fill="none" stroke="#e8e8e8" stroke-width="1.2" stroke-linecap="round" stroke-linejoin="round"/></svg>
<svg style="position:absolute;left:451px;top:549.5px;z-index:15;overflow:visible;" width="13" height="12" viewBox="0 0 13 12"><rect x="0.6" y="0.6" width="11.6" height="10.8" fill="none" stroke="#e8e8e8" stroke-width="1" stroke-linecap="round" stroke-linejoin="round"/><path d="M4.4 0.6V11.4M8.4 0.6V11.4M0.6 4.2H12.2M0.6 7.8H12.2" fill="none" stroke="#e8e8e8" stroke-width="1" stroke-linecap="round" stroke-linejoin="round"/></svg>
<svg style="position:absolute;left:488px;top:549.5px;z-index:15;overflow:visible;" width="13" height="12" viewBox="0 0 13 12"><rect x="0.6" y="0.6" width="11.6" height="10.8" fill="none" stroke="#e8e8e8" stroke-width="1" stroke-linecap="round" stroke-linejoin="round"/><rect x="3.2" y="3" width="6.4" height="6.2" fill="none" stroke="#e8e8e8" stroke-width="0.9" stroke-linecap="round" stroke-linejoin="round"/><path d="M4.6 5H8.2M4.6 7H8.2" fill="none" stroke="#e8e8e8" stroke-width="0.7" stroke-linecap="round" stroke-linejoin="round"/></svg>
<svg style="position:absolute;left:524px;top:549.5px;z-index:15;overflow:visible;" width="13" height="12" viewBox="0 0 13 12"><rect x="0.6" y="0.6" width="11.6" height="10.8" fill="none" stroke="#e8e8e8" stroke-width="1" stroke-linecap="round" stroke-linejoin="round"/><path d="M4.4 0.6V6H8.6V0.6" fill="none" stroke="#e8e8e8" stroke-width="1" stroke-linecap="round" stroke-linejoin="round"/></svg>
<span class="t" style="left:432.30px;top:14.32px;font-size:11.2px;color:#ffffff;z-index:5;transform:scaleX(0.9245);">Book...</span>
<span class="t" style="left:536.80px;top:14.15px;font-size:11.4px;color:#1a1a1a;z-index:5;transform:scaleX(0.9528);">Sign in</span>
<span class="t" style="left:16.00px;top:50.65px;font-size:11.4px;color:#ffffff;z-index:5;transform:scaleX(1.0077);">File</span>
<span class="t" style="left:58.50px;top:50.65px;font-size:11.4px;color:#ffffff;z-index:5;transform:scaleX(1.0351);">Insert</span>
<span class="t" style="left:106.00px;top:50.65px;font-size:11.4px;color:#ffffff;z-index:5;font-weight:bold;transform:scaleX(1.0740);">Home</span>
<span class="t" style="left:157.00px;top:50.65px;font-size:11.4px;color:#ffffff;z-index:5;transform:scaleX(1.0529);">Draw</span>
<span class="t" style="left:202.00px;top:50.65px;font-size:11.4px;color:#ffffff;z-index:5;transform:scaleX(1.0239);">Page Layout</span>
<span class="t" style="left:286.00px;top:50.65px;font-size:11.4px;color:#ffffff;z-index:5;transform:scaleX(1.0424);">Formulas</span>
<span class="t" style="left:352.50px;top:50.65px;font-size:11.4px;color:#ffffff;z-index:5;transform:scaleX(1.0805);">Data</span>
<span class="t" style="left:394.50px;top:50.65px;font-size:11.4px;color:#ffffff;z-index:5;transform:scaleX(1.0038);">Review</span>
<span class="t" style="left:450.00px;top:50.65px;font-size:11.4px;color:#ffffff;z-index:5;transform:scaleX(1.0415);">View</span>
<span class="t" style="left:493.00px;top:50.65px;font-size:11.4px;color:#ffffff;z-index:5;transform:scaleX(1.0689);">Developer</span>
<span class="t" style="left:566.50px;top:50.65px;font-size:11.4px;color:#ffffff;z-index:5;transform:scaleX(1.0453);">Help</span>
<span class="t" style="left:665.60px;top:50.18px;font-size:11.6px;color:#0c2a17;z-index:5;transform:scaleX(0.9503);">Share</span>
<span class="t" style="left:22.00px;top:109.27px;font-size:11.5px;color:#fff;z-index:5;transform:scaleX(0.8157);">Paste</span>
<span class="t" style="left:25.00px;top:146.16px;font-size:10.8px;color:#fff;z-index:5;transform:scaleX(0.8871);">Clipboard</span>
<span class="t" style="left:112.00px;top:106.77px;font-size:11.5px;color:#fff;z-index:5;transform:scaleX(0.9559);">Font</span>
<span class="t" style="left:155.50px;top:106.77px;font-size:11.5px;color:#fff;z-index:5;transform:scaleX(0.9777);">Alignment</span>
<span class="t" style="left:221.75px;top:106.77px;font-size:11.5px;color:#fff;z-index:5;transform:scaleX(0.9534);">Number</span>
<span class="t" style="left:298.60px;top:78.97px;font-size:11.5px;color:#fff;z-index:5;transform:scaleX(0.9671);">Conditional Formatting</span>
<span class="t" style="left:298.60px;top:102.77px;font-size:11.5px;color:#fff;z-index:5;transform:scaleX(0.9228);">Format as Table</span>
<span class="t" style="left:298.60px;top:126.57px;font-size:11.5px;color:#fff;z-index:5;transform:scaleX(0.8679);">Cell Styles</span>
<span class="t" style="left:340.75px;top:146.16px;font-size:10.8px;color:#fff;z-index:5;transform:scaleX(0.7991);">Styles</span>
<span class="t" style="left:450.50px;top:106.77px;font-size:11.5px;color:#fff;z-index:5;transform:scaleX(0.8411);">Cells</span>
<span class="t" style="left:494.25px;top:106.77px;font-size:11.5px;color:#fff;z-index:5;transform:scaleX(0.9240);">Editing</span>
<span class="t" style="left:545.00px;top:107.80px;font-size:12.4px;color:#fff;z-index:5;transform:scaleX(0.9044);">Add-ins</span>
<span class="t" style="left:547.50px;top:146.16px;font-size:10.8px;color:#fff;z-index:5;transform:scaleX(0.9014);">Add-ins</span>
<span class="t" style="left:8.30px;top:173.73px;font-size:15.2px;color:#fff;z-index:5;transform:scaleX(0.9258);">B5</span>
<span class="t" style="left:164.40px;top:173.02px;font-size:15.5px;color:#fff;z-index:5;font-weight:bold;font-style:italic;font-family:'Liberation Serif', serif;transform:scaleX(0.9674);">fx</span>
<span class="t" style="left:197.20px;top:173.96px;font-size:14.7px;color:#fff;z-index:5;transform:scaleX(0.9504);">=CHOOSE(</span>
<span class="t" style="left:270.60px;top:173.96px;font-size:14.7px;color:#fff;z-index:5;transform:scaleX(1.0329);">A5,50,100,</span>
<span class="t" style="left:348.40px;top:173.96px;font-size:14.7px;color:#fff;z-index:5;transform:scaleX(1.0212);">150,200,</span>
<span class="t" style="left:411.20px;top:173.96px;font-size:14.7px;color:#fff;z-index:5;transform:scaleX(1.0299);">250,300,</span>
<span class="t" style="left:475.10px;top:173.96px;font-size:14.7px;color:#fff;z-index:5;transform:scaleX(1.0212);">350,</span>
<span class="t" style="left:508.50px;top:173.96px;font-size:14.7px;color:#fff;z-index:5;transform:scaleX(1.0313);">400,500)</span>
<span class="t" style="left:70.76px;top:226.69px;font-size:15.6px;color:#f0f0f0;z-index:5;transform:scaleX(0.9200);">A</span>
<span class="t" style="left:197.66px;top:226.69px;font-size:15.6px;color:#f0f0f0;z-index:5;transform:scaleX(0.9200);">B</span>
<span class="t" style="left:314.32px;top:226.69px;font-size:15.6px;color:#f0f0f0;z-index:5;transform:scaleX(0.9200);">C</span>
<span class="t" style="left:392.22px;top:226.69px;font-size:15.6px;color:#f0f0f0;z-index:5;transform:scaleX(0.9200);">D</span>
<span class="t" style="left:471.24px;top:226.69px;font-size:15.6px;color:#f0f0f0;z-index:5;transform:scaleX(0.8000);">E</span>
<span class="t" style="left:549.02px;top:226.69px;font-size:15.6px;color:#f0f0f0;z-index:5;transform:scaleX(0.9200);">F</span>
<span class="t" style="left:625.92px;top:226.69px;font-size:15.6px;color:#f0f0f0;z-index:5;transform:scaleX(0.9200);">G</span>
<span class="t" style="left:8.29px;top:249.57px;font-size:14.8px;color:#ffffff;z-index:4;transform:scaleX(0.9000);">1</span>
<span class="t" style="left:8.29px;top:272.20px;font-size:14.8px;color:#ffffff;z-index:4;transform:scaleX(0.9000);">2</span>
<span class="t" style="left:8.29px;top:294.83px;font-size:14.8px;color:#ffffff;z-index:4;transform:scaleX(0.9000);">3</span>
<span class="t" style="left:8.29px;top:317.46px;font-size:14.8px;color:#ffffff;z-index:4;transform:scaleX(0.9000);">4</span>
<span class="t" style="left:8.29px;top:340.09px;font-size:14.8px;color:#ffffff;z-index:4;transform:scaleX(0.9000);">5</span>
<span class="t" style="left:8.29px;top:362.72px;font-size:14.8px;color:#ffffff;z-index:4;transform:scaleX(0.9000);">6</span>
<span class="t" style="left:8.29px;top:385.35px;font-size:14.8px;color:#ffffff;z-index:4;transform:scaleX(0.9000);">7</span>
<span class="t" style="left:8.29px;top:407.98px;font-size:14.8px;color:#ffffff;z-index:4;transform:scaleX(0.9000);">8</span>
<span class="t" style="left:8.29px;top:430.61px;font-size:14.8px;color:#ffffff;z-index:4;transform:scaleX(0.9000);">9</span>
<span class="t" style="left:4.59px;top:453.24px;font-size:14.8px;color:#ffffff;z-index:4;transform:scaleX(0.9000);">10</span>
<span class="t" style="left:5.08px;top:475.87px;font-size:14.8px;color:#ffffff;z-index:4;transform:scaleX(0.9000);">11</span>
<span class="t" style="left:4.59px;top:498.50px;font-size:14.8px;color:#ffffff;z-index:4;transform:scaleX(0.9000);">12</span>
<span class="t" style="left:4.59px;top:521.13px;font-size:14.8px;color:#ffffff;z-index:4;transform:scaleX(0.9000);">13</span>
<span class="t" style="left:30.50px;top:249.73px;font-size:14.5px;color:#1c0b03;z-index:5;font-weight:bold;transform:scaleX(1.0414);">Index Value</span>
<span class="t" style="left:128.50px;top:249.73px;font-size:14.5px;color:#1c0b03;z-index:5;font-weight:bold;transform:scaleX(0.9964);">Function</span>
<span class="t" style="left:128.00px;top:272.22px;font-size:14.6px;color:#0a0a0a;z-index:5;transform:scaleX(1.0582);">Apple</span>
<span class="t" style="left:128.00px;top:294.85px;font-size:14.6px;color:#0a0a0a;z-index:5;transform:scaleX(1.0075);">Plum</span>
<span class="t" style="left:128.00px;top:317.48px;font-size:14.6px;color:#0a0a0a;z-index:5;transform:scaleX(1.0372);">Orange</span>
<span class="t" style="left:113.85px;top:272.05px;font-size:14.8px;color:#0a0a0a;z-index:5;transform:scaleX(0.8800);">1</span>
<span class="t" style="left:113.85px;top:294.68px;font-size:14.8px;color:#0a0a0a;z-index:5;transform:scaleX(0.8800);">3</span>
<span class="t" style="left:113.85px;top:317.31px;font-size:14.8px;color:#0a0a0a;z-index:5;transform:scaleX(0.8800);">2</span>
<span class="t" style="left:113.85px;top:339.94px;font-size:14.8px;color:#0a0a0a;z-index:5;transform:scaleX(0.8800);">3</span>
<span class="t" style="left:113.85px;top:362.57px;font-size:14.8px;color:#0a0a0a;z-index:5;transform:scaleX(0.8800);">8</span>
<span class="t" style="left:113.85px;top:385.20px;font-size:14.8px;color:#0a0a0a;z-index:5;transform:scaleX(0.8800);">2</span>
<span class="t" style="left:252.90px;top:339.86px;font-size:14.9px;color:#0a0a0a;z-index:5;transform:scaleX(0.9976);">150</span>
<span class="t" style="left:76.30px;top:527.90px;font-size:12.4px;color:#256b45;z-index:16;font-weight:bold;transform:scaleX(0.9424);">Sheet1</span>
<span class="t" style="left:7.50px;top:550.57px;font-size:10.2px;color:#fff;z-index:15;transform:scaleX(0.8828);">Ready</span>
<span class="t" style="left:94.50px;top:550.40px;font-size:10.4px;color:#fff;z-index:15;transform:scaleX(0.9096);">Accessibility: Good to go</span>
<span class="t" style="left:680.50px;top:550.57px;font-size:10.2px;color:#fff;z-index:15;transform:scaleX(0.9017);">100%</span>
<span class="t" style="left:209.00px;top:11.17px;font-size:9.6px;color:#e8e8e8;z-index:5;transform:scaleX(1.0307);">ab</span>
<span class="t" style="left:329.50px;top:14.71px;font-size:10.5px;color:#e8e8e8;z-index:5;transform:scaleX(0.9412);">ab</span>
</div></body></html>
